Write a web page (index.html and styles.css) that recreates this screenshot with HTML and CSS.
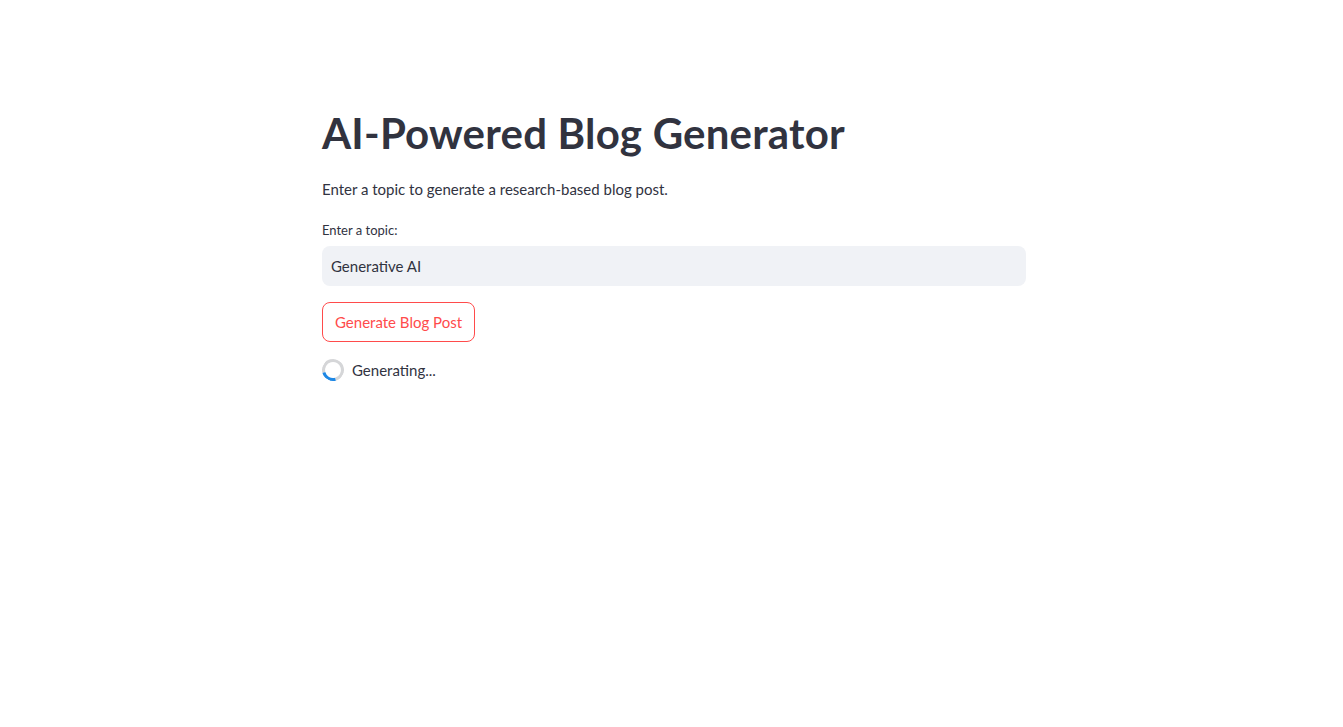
FILE: index.html
```html
<!DOCTYPE html>
<html lang="en">
<head>
<meta charset="utf-8">
<title>AI-Powered Blog Generator</title>
<link rel="stylesheet" href="styles.css">
</head>
<body>
<main class="app">
  <div class="block">
    <h1 class="title">AI-Powered Blog Generator</h1>
    <p class="lead">Enter a topic to generate a research-based blog post.</p>
    <div class="field">
      <label class="label" for="topic">Enter a topic:</label>
      <input id="topic" class="input" type="text" value="Generative AI">
    </div>
    <div class="actions">
      <button class="btn" type="button">Generate Blog Post</button>
    </div>
    <div class="status">
      <span class="spinner"></span>
      <span class="status-text">Generating...</span>
    </div>
  </div>
</main>
</body>
</html>
```
FILE: styles.css
```css
html, body {
  margin: 0;
  padding: 0;
  background: #ffffff;
}
body {
  font-family: "Source Sans Pro", Lato, "Liberation Sans", sans-serif;
  color: rgb(49, 51, 63);
}
.app {
  display: flex;
  justify-content: center;
  padding: 107px 0 0 5px;
}
.block {
  width: 704px;
  display: flex;
  flex-direction: column;
}
.title {
  margin: 0;
  font-size: 42px;
  font-weight: 700;
  line-height: 52px;
  letter-spacing: 0.2px;
  color: rgb(49, 51, 63);
}
.lead {
  margin: 18px 0 0;
  font-size: 15px;
  line-height: 24px;
}
.field {
  margin-top: 20px;
  display: flex;
  flex-direction: column;
}
.label {
  font-size: 13px;
  line-height: 18px;
  margin-bottom: 7px;
}
.input {
  box-sizing: border-box;
  height: 40px;
  width: 100%;
  border: none;
  outline: none;
  border-radius: 8px;
  background: rgb(240, 242, 246);
  padding: 0 9px;
  font-family: inherit;
  font-size: 15px;
  color: rgb(49, 51, 63);
}
.actions {
  margin-top: 16px;
  display: flex;
}
.btn {
  box-sizing: border-box;
  height: 40px;
  padding: 0 12px;
  border: 1px solid rgb(255, 75, 75);
  border-radius: 8px;
  background: #ffffff;
  color: rgb(255, 75, 75);
  font-family: inherit;
  font-size: 15px;
}
.status {
  margin-top: 16px;
  display: flex;
  align-items: center;
  gap: 8px;
}
.spinner {
  box-sizing: border-box;
  width: 22px;
  height: 22px;
  border-radius: 50%;
  border: 3px solid rgba(49, 51, 63, 0.2);
  border-bottom-color: rgb(30, 136, 229);
  transform: rotate(30deg);
}
.status-text {
  font-size: 15px;
  line-height: 24px;
}
```
